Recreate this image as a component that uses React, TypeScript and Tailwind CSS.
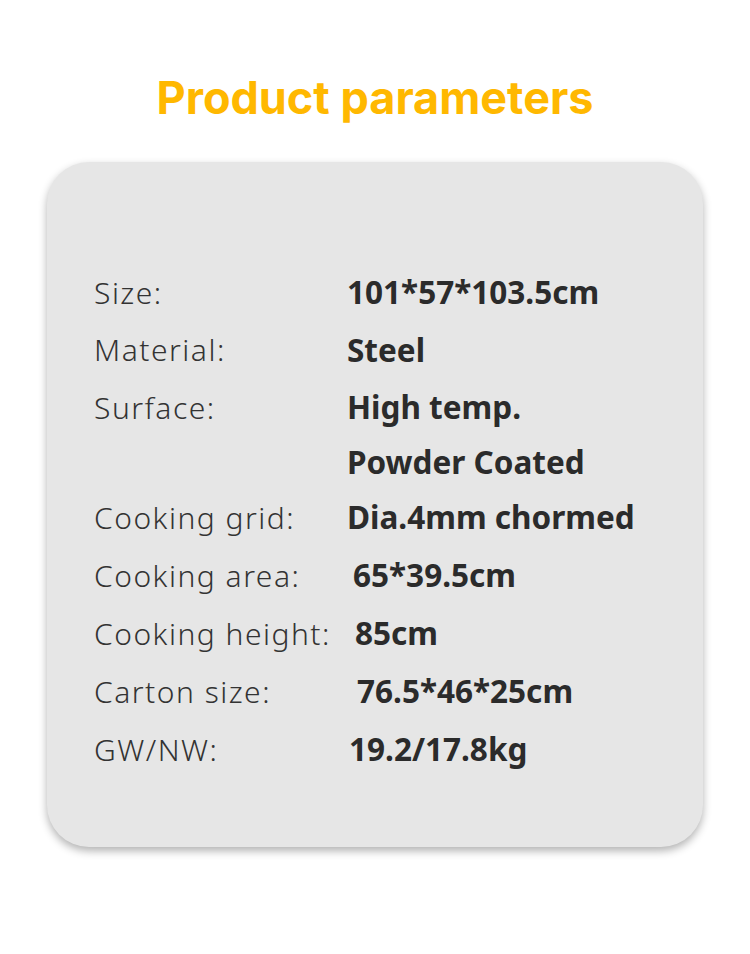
const rows: { label: string; value: string; pad: string; h: string }[] = [
  { label: "Size:", value: "101*57*103.5cm", pad: "pl-0", h: "h-[58px]" },
  { label: "Material:", value: "Steel", pad: "pl-0", h: "h-[57px]" },
  { label: "Surface:", value: "High temp.", pad: "pl-0", h: "h-[58px]" },
  { label: "", value: "Powder Coated", pad: "pl-0", h: "h-[52px]" },
  { label: "Cooking grid:", value: "Dia.4mm chormed", pad: "pl-0", h: "h-[58px]" },
  { label: "Cooking area:", value: "65*39.5cm", pad: "pl-[6px]", h: "h-[58px]" },
  { label: "Cooking height:", value: "85cm", pad: "pl-[8px]", h: "h-[58px]" },
  { label: "Carton size:", value: "76.5*46*25cm", pad: "pl-[10px]", h: "h-[58px]" },
  { label: "GW/NW:", value: "19.2/17.8kg", pad: "pl-[2px]", h: "h-[58px]" },
];

export default function App() {
  return (
    <div className="w-[750px] h-[954px] bg-white font-['Noto_Sans',Inter,sans-serif]">
      <div className="pt-[69px] flex justify-center">
        <h1 className="font-['Inter','Noto_Sans',sans-serif] text-[45px] leading-[58px] font-bold text-[#ffb800]">
          Product parameters
        </h1>
      </div>
      <div className="mt-[35px] mx-[47px] h-[685px] rounded-[42px] bg-[#e6e6e6] shadow-[0_4px_8px_rgba(0,0,0,0.3)] pt-[101px] pl-[47px] flex flex-col">
        {rows.map((r, i) => (
          <div key={i} className={`flex items-center ${r.h}`}>
            <div className="w-[253px] text-[30px] font-light text-[#333333] tracking-[1.5px]">{r.label}</div>
            <div className={`text-[31.5px] font-bold text-[#2b2b2b] ${r.pad}`}>{r.value}</div>
          </div>
        ))}
      </div>
    </div>
  );
}
